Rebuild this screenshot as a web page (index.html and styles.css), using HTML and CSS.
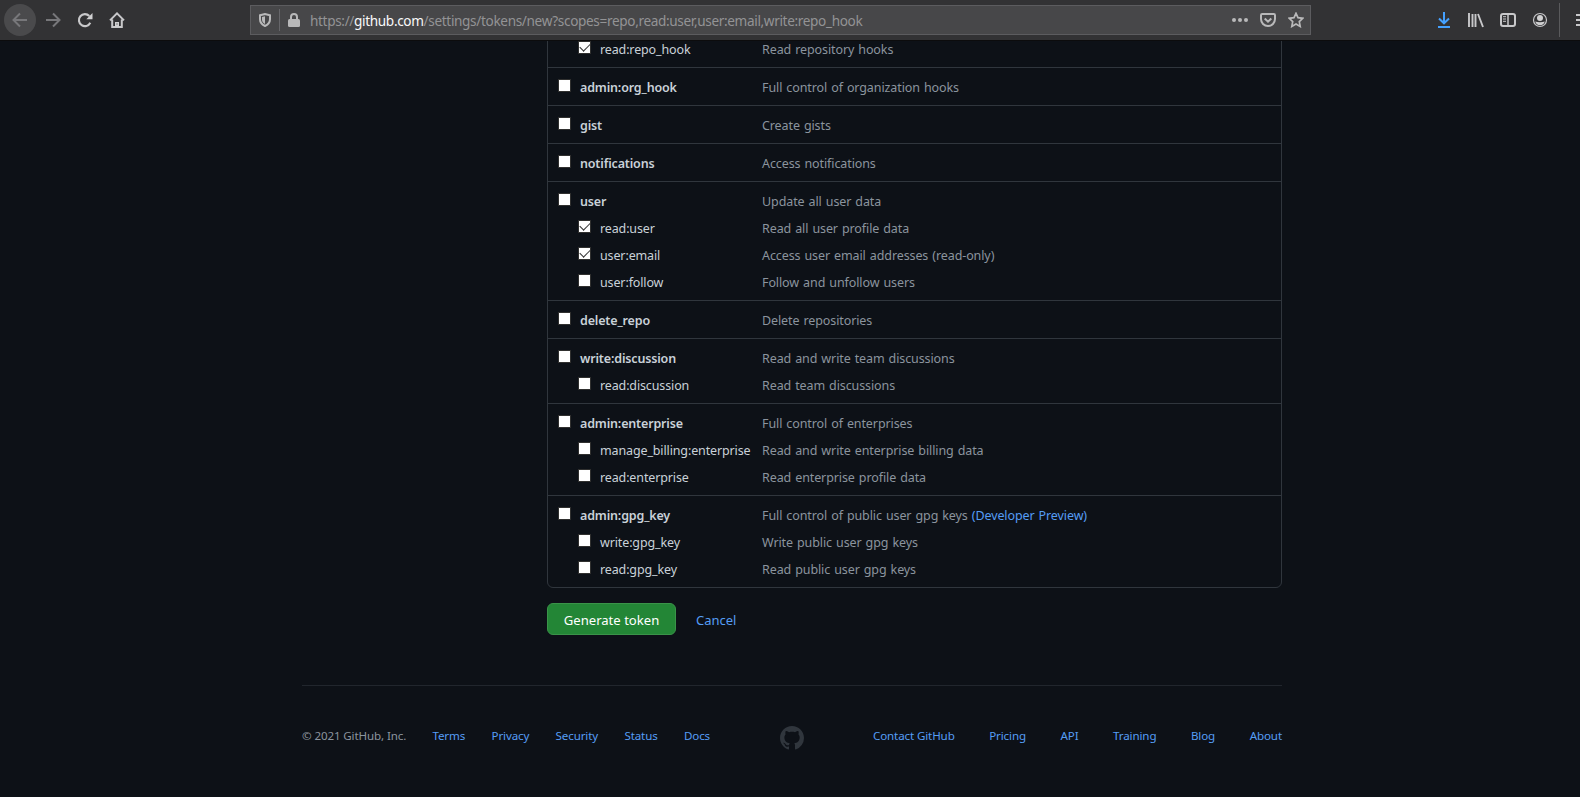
FILE: index.html
```html
<!DOCTYPE html>
<html lang="en">
<head>
<meta charset="utf-8">
<title>New personal access token</title>
<link rel="stylesheet" href="styles.css">
</head>
<body>
<header class="toolbar">
  <div class="nav">
    <span class="back"><svg width="16" height="16" viewBox="0 0 16 16"><path d="M15 8H1.5M8 1.5L1.5 8L8 14.5"/></svg></span>
    <svg class="dim" width="16" height="16" viewBox="0 0 16 16"><path d="M1 8h13.5M8 1.5L14.5 8L8 14.5"/></svg>
    <svg width="16" height="16" viewBox="0 0 16 16"><path d="M13.300 10.800A6 6 0 1 1 12.300 4" stroke-width="2.1"/><path d="M15.500 1v6.200H9.300z" fill="#d0d0d1" stroke="none"/></svg>
    <svg width="16" height="16" viewBox="0 0 16 16"><path d="M1 8.4L8 1.4L15 8.4M3.2 7.5V15h9.6V7.5"/><path d="M6 15v-5h4v5z" fill="#d0d0d1" stroke="none"/><path d="M8 11.5v1" stroke="#323234" stroke-width="1"/></svg>
  </div>
  <div class="urlbar">
    <svg class="shield" width="12" height="14" viewBox="0 0 12 14"><path d="M1 2.3L6 1l5 1.300v4c0 3.300-2 5.300-5 6.700c-3-1.400-5-3.400-5-6.700z"/><path d="M6 3.300v7.600c-1.800-1-3-2.500-3-4.500V4z" fill="#b9b9ba" stroke="none"/></svg>
    <span class="bar"></span>
    <svg class="lock" width="12" height="14" viewBox="0 0 12 14"><path d="M3 7V4a3 3 0 0 1 6 0v3"/><rect x="0" y="6" width="12" height="8" rx="1.500" fill="#b9b9ba" stroke="none"/></svg>
    <span class="url">https://<b>github.com</b>/settings/tokens/new?scopes=repo,read:user,user:email,write:repo_hook</span>
    <span class="actions">
      <svg width="16" height="16" viewBox="0 0 16 16"><g fill="#b9b9ba" stroke="none"><circle cx="2" cy="8" r="2"/><circle cx="8" cy="8" r="2"/><circle cx="14" cy="8" r="2"/></g></svg>
      <svg width="16" height="16" viewBox="0 0 16 16"><path d="M2.200 2h11.600q1.200 0 1.200 1.200V7A7 7 0 0 1 1 7V3.200Q1 2 2.200 2zM4.700 6.500L8 9.700L11.300 6.500"/></svg>
      <svg width="16" height="16" viewBox="0 0 16 16"><path d="M8 1.300l2 4.400l4.800.6l-3.500 3.300l.9 4.900L8 12.100l-4.200 2.400l.9-4.900L1.200 6.300L6 5.700z" stroke-width="1.700"/></svg>
    </span>
  </div>
  <div class="tools">
    <svg class="download" width="14" height="16" viewBox="0 0 14 16"><path d="M7 0v11M2 6.500L7 11.300l5-4.800M1 15h12"/></svg>
    <svg width="16" height="16" viewBox="0 0 16 16"><path d="M1 1v14M4.500 2v13M7.500 2v13M10 2l5 13" stroke-width="1.900"/></svg>
    <svg width="16" height="16" viewBox="0 0 16 16"><rect x="1" y="2" width="14" height="12" rx="2"/><path d="M8 2v12" stroke-width="1.500"/><path d="M3 4.700h3M3 7h3M3 9.300h3" stroke-width="1"/></svg>
    <svg width="16" height="16" viewBox="0 0 16 16"><circle cx="8" cy="8" r="6.500" stroke-width="1.200"/><g fill="#d0d0d1" stroke="none"><circle cx="8" cy="6" r="3"/><path d="M3.200 9.500q2 .8 4.800.8t4.800-.8q-1 3.700-4.800 3.700t-4.800-3.700z"/></g></svg>
  </div>
  <span class="divider"></span>
  <svg class="menu" width="16" height="16" viewBox="0 0 16 16"><path d="M1 3h14M1 8h14M1 13h14"/></svg>
</header>

<main class="page">
  <section class="scopes">
    <div class="group">
      <div class="row sub"><i class="box on"></i><span class="name">read:repo_hook</span><span class="desc">Read repository hooks</span></div>
    </div>
    <div class="group">
      <div class="row"><i class="box"></i><span class="name">admin:org_hook</span><span class="desc">Full control of organization hooks</span></div>
    </div>
    <div class="group">
      <div class="row"><i class="box"></i><span class="name">gist</span><span class="desc">Create gists</span></div>
    </div>
    <div class="group">
      <div class="row"><i class="box"></i><span class="name">notifications</span><span class="desc">Access notifications</span></div>
    </div>
    <div class="group">
      <div class="row"><i class="box"></i><span class="name">user</span><span class="desc">Update all user data</span></div>
      <div class="row sub"><i class="box on"></i><span class="name">read:user</span><span class="desc">Read all user profile data</span></div>
      <div class="row sub"><i class="box on"></i><span class="name">user:email</span><span class="desc">Access user email addresses (read-only)</span></div>
      <div class="row sub"><i class="box"></i><span class="name">user:follow</span><span class="desc">Follow and unfollow users</span></div>
    </div>
    <div class="group">
      <div class="row"><i class="box"></i><span class="name">delete_repo</span><span class="desc">Delete repositories</span></div>
    </div>
    <div class="group">
      <div class="row"><i class="box"></i><span class="name">write:discussion</span><span class="desc">Read and write team discussions</span></div>
      <div class="row sub"><i class="box"></i><span class="name">read:discussion</span><span class="desc">Read team discussions</span></div>
    </div>
    <div class="group">
      <div class="row"><i class="box"></i><span class="name">admin:enterprise</span><span class="desc">Full control of enterprises</span></div>
      <div class="row sub"><i class="box"></i><span class="name">manage_billing:enterprise</span><span class="desc">Read and write enterprise billing data</span></div>
      <div class="row sub"><i class="box"></i><span class="name">read:enterprise</span><span class="desc">Read enterprise profile data</span></div>
    </div>
    <div class="group">
      <div class="row"><i class="box"></i><span class="name">admin:gpg_key</span><span class="desc">Full control of public user gpg keys <a>(Developer Preview)</a></span></div>
      <div class="row sub"><i class="box"></i><span class="name">write:gpg_key</span><span class="desc">Write public user gpg keys</span></div>
      <div class="row sub"><i class="box"></i><span class="name">read:gpg_key</span><span class="desc">Read public user gpg keys</span></div>
    </div>
  </section>

  <div class="form-actions">
    <button class="generate">Generate token</button>
    <a class="cancel">Cancel</a>
  </div>

  <footer class="footer">
    <div class="links left"><span>© 2021 GitHub, Inc.</span><a>Terms</a><a>Privacy</a><a>Security</a><a>Status</a><a>Docs</a></div>
    <svg class="mark" width="24" height="24" viewBox="0 0 16 16"><path d="M8 0C3.58 0 0 3.58 0 8c0 3.54 2.29 6.53 5.47 7.59.4.07.55-.17.55-.38 0-.19-.01-.82-.01-1.49-2.01.37-2.53-.49-2.69-.94-.09-.23-.48-.94-.82-1.13-.28-.15-.68-.52-.01-.53.63-.01 1.08.58 1.23.82.72 1.21 1.87.87 2.33.66.07-.52.28-.87.51-1.07-1.78-.2-3.64-.89-3.64-3.95 0-.87.31-1.590.82-2.150-.08-.2-.36-1.020.08-2.120 0 0 .67-.21 2.200.82.64-.18 1.320-.27 2-.27.68 0 1.360.09 2 .27 1.530-1.040 2.200-.82 2.200-.82.44 1.100.16 1.920.08 2.120.51.56.82 1.270.82 2.150 0 3.070-1.870 3.750-3.650 3.950.29.25.54.73.54 1.480 0 1.070-.01 1.930-.01 2.200 0 .21.15.46.55.38A8.013 8.013 0 0016 8c0-4.420-3.580-8-8-8z"/></svg>
    <div class="links right"><a>Contact GitHub</a><a>Pricing</a><a>API</a><a>Training</a><a>Blog</a><a>About</a></div>
  </footer>
</main>
</body>
</html>
```
FILE: styles.css
```css
* { box-sizing: border-box; }
body {
  margin: 0;
  height: 797px;
  overflow: hidden;
  background: #0d1117;
  color: #c9d1d9;
  font-family: "Noto Sans", "Open Sans", sans-serif;
}
svg { display: block; flex: none; fill: none; stroke: #c8c8ca; stroke-width: 2; }
a { color: #559df5; }

/* Browser toolbar */
.toolbar {
  display: flex;
  align-items: center;
  width: 1580px;
  height: 41px;
  padding: 0 0 1px 4px;
  overflow: hidden;
  background: #323234;
  border-bottom: 1px solid #0c0c0d;
}
.nav { display: flex; align-items: center; gap: 16px; width: 246px; flex: none; }
.back {
  display: grid;
  place-items: center;
  width: 32px;
  height: 32px;
  margin-right: -7px;
  border-radius: 50%;
  background: #4a4a4c;
}
.back svg, .dim { stroke: #77777a; }
.urlbar {
  display: flex;
  align-items: center;
  flex: none;
  width: 1061px;
  height: 30px;
  padding: 0 6px 0 8px;
  background: #474749;
  border: 1px solid #5c5c5f;
}
.urlbar svg { stroke: #b9b9ba; }
.bar { width: 1px; height: 22px; margin: 0 8px; background: #66666a; }
.url { margin: 1px 0 0 10px; color: #939395; font-size: 13.6px; letter-spacing: -0.35px; white-space: nowrap; }
.url b { color: #f9f9fa; font-weight: 400; letter-spacing: -0.35px; }
.actions { display: flex; gap: 12px; margin-left: auto; }
.tools { display: flex; gap: 16px; margin-left: 126px; }
.tools .download { stroke: #45a1ff; margin-right: 1px; }
.divider { flex: none; width: 1px; height: 34px; margin: 0 15px 0 11px; background: #5a5a5c; }

/* Token scopes */
.page { height: 756px; overflow: hidden; }
.scopes {
  width: 735px;
  margin: -12px 0 0 547px;
  border: 1px solid #30363d;
  border-radius: 6px;
}
.group { padding: 5px 0; border-top: 1px solid #30363d; }
.group:first-child { border-top: 0; }
.row { display: flex; height: 27px; padding-left: 10px; font-size: 12.5px; line-height: 29px; white-space: nowrap; }
.sub { padding-left: 30px; }
.box { position: relative; flex: none; width: 13px; height: 13px; margin: 6px 9px 0 0; background: #fff; border: 1px solid #30302f; }
.box.on::after {
  content: "";
  position: absolute;
  left: 1px;
  top: 1px;
  width: 9px;
  height: 5px;
  border: solid #333;
  border-width: 0 0 1.500px 1.500px;
  transform: rotate(-45deg);
}
.name { width: 182px; font-weight: 600; letter-spacing: -0.16px; }
.sub .name { width: 162px; font-weight: 400; letter-spacing: -0.13px; }
.desc { color: #8b949e; letter-spacing: -0.1px; word-spacing: 0.900px; }

.form-actions { display: flex; align-items: center; gap: 20px; margin: 15px 0 0 547px; font-size: 13px; }
.cancel { padding-top: 1px; }
.generate {
  width: 129px;
  height: 32px;
  padding: 2px 0 0;
  color: #fff;
  font: 13.1px "Noto Sans", sans-serif;
  background: #238636;
  border: 1px solid #3a9349;
  border-radius: 6px;
}

/* Footer */
.footer {
  display: flex;
  width: 980px;
  margin: 50px 0 0 302px;
  padding-top: 40px;
  border-top: 1px solid #21262d;
  color: #8b949e;
  font-size: 11.6px;
  letter-spacing: -0.13px;
}
.links { display: flex; justify-content: space-between; line-height: 19px; white-space: nowrap; }
.left { width: 408px; }
.right { width: 409px; margin-left: auto; }
.mark { margin-left: 70px; fill: #30363d; stroke: none; }
```
